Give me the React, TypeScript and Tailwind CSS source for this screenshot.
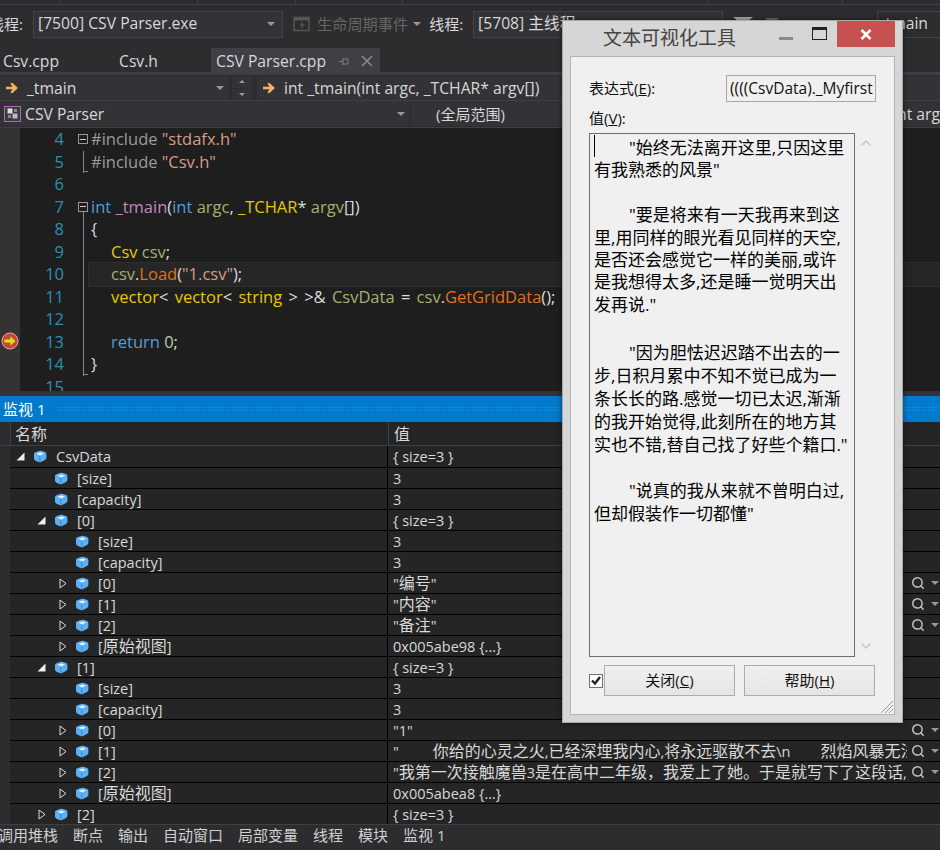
import React from "react";
import { Search, ChevronUp, ChevronDown } from "lucide-react";

const FONT = { fontFamily: '"Open Sans","Noto Sans CJK SC",sans-serif' };

function Caret({ className = "" }: { className?: string }) {
  return <span className={"inline-block w-0 h-0 border-x-[4px] border-x-transparent border-t-[4px] border-t-[#999] " + className} />;
}

function Cube() {
  return (
    <svg width="14" height="13" viewBox="0 0 14 13" className="shrink-0 block">
      <path d="M1 4 Q1 2.5 3 2 L7 0.8 Q8 0.6 9 1 L12 2 Q13.4 2.6 13.4 4 L13.4 8 Q13.4 9.2 12 10 L8 12 Q7 12.5 6 12.2 L2.5 10.8 Q1 10 1 8.5 Z" fill="#5cb0f5" />
      <path d="M3.4 3.8 L7.4 2.5 L11 3.6 L7.4 5.4 Z" fill="#e4f3ff" />
      <path d="M6.8 6 L6.8 11.5" stroke="#3a80bd" strokeWidth="0.9" />
    </svg>
  );
}

function OpenTri() {
  return (
    <svg width="9" height="9" viewBox="0 0 9 9" className="shrink-0 -translate-x-px">
      <path d="M8.5 0.5 L8.5 8.5 L0.5 8.5 Z" fill="#eee" />
    </svg>
  );
}
function ClosedTri() {
  return (
    <svg width="8" height="11" viewBox="0 0 8 11" className="shrink-0">
      <path d="M1 1 L7 5.5 L1 10 Z" fill="none" stroke="#ddd" strokeWidth="1" />
    </svg>
  );
}

function Arrow() {
  return (
    <svg width="14" height="12" viewBox="0 0 14 12" className="shrink-0">
      <path d="M1 4.8 H7.4 L5.4 1.6 L7.2 0.8 L13 6 L7.2 11.2 L5.4 10.4 L7.4 7.2 H1 Z" fill="#f2b263" />
    </svg>
  );
}

function T({ s }: { s: string }) {
  const parts = s.split(/([\u4e00-\u9fff，。]+)/);
  return (
    <>
      {parts.map((p, i) =>
        i % 2 === 1 ? (
          <span key={i} className="text-[16px]">{p}</span>
        ) : (
          <span key={i}>{p}</span>
        )
      )}
    </>
  );
}

type Row = { d: number; t?: "o" | "c"; n: string; v: string; mag?: boolean };
const rows: Row[] = [
  { d: 0, t: "o", n: "CsvData", v: "{ size=3 }" },
  { d: 1, n: "[size]", v: "3" },
  { d: 1, n: "[capacity]", v: "3" },
  { d: 1, t: "o", n: "[0]", v: "{ size=3 }" },
  { d: 2, n: "[size]", v: "3" },
  { d: 2, n: "[capacity]", v: "3" },
  { d: 2, t: "c", n: "[0]", v: '"编号"', mag: true },
  { d: 2, t: "c", n: "[1]", v: '"内容"', mag: true },
  { d: 2, t: "c", n: "[2]", v: '"备注"', mag: true },
  { d: 2, t: "c", n: "[原始视图]", v: "0x005abe98 {...}" },
  { d: 1, t: "o", n: "[1]", v: "{ size=3 }" },
  { d: 2, n: "[size]", v: "3" },
  { d: 2, n: "[capacity]", v: "3" },
  { d: 2, t: "c", n: "[0]", v: '"1"', mag: true },
  { d: 2, t: "c", n: "[1]", v: '"\u00a0\u00a0\u00a0\u00a0\u00a0\u00a0\u00a0\u00a0\u00a0你给的心灵之火,已经深埋我内心,将永远驱散不去\\n\u00a0\u00a0\u00a0\u00a0\u00a0\u00a0\u00a0\u00a0烈焰风暴无法', mag: true },
  { d: 2, t: "c", n: "[2]", v: '"我第一次接触魔兽3是在高中二年级，我爱上了她。于是就写下了这段话,那', mag: true },
  { d: 2, t: "c", n: "[原始视图]", v: "0x005abea8 {...}" },
  { d: 1, t: "c", n: "[2]", v: "{ size=3 }" },
];

const C = {
  kw: "text-[#569cd6]",
  ty: "text-[#e8c800]",
  fn: "text-[#e0701e]",
  va: "text-[#a8b070]",
  st: "text-[#d69d85]",
  pp: "text-[#9b9b9b]",
  pu: "text-[#dcdcdc]",
  mg: "text-[#c586c0]",
};

const code: React.ReactNode[] = [
  <><span className={C.pp}>#include </span><span className={C.st}>"stdafx.h"</span></>,
  <><span className={C.pp}>#include </span><span className={C.st}>"Csv.h"</span></>,
  <></>,
  <><span className={C.kw}>int </span><span className={C.mg}>_tmain</span><span className={C.pu}>(</span><span className={C.kw}>int </span><span className={C.va}>argc</span><span className={C.pu}>, </span><span className={C.ty}>_TCHAR</span><span className={C.pu}>* </span><span className={C.va}>argv</span><span className={C.pu}>[])</span></>,
  <span className={C.pu}>{"{"}</span>,
  <span className="pl-5"><span className={C.ty}>Csv </span><span className={C.va}>csv</span><span className={C.pu}>;</span></span>,
  <span className="pl-5"><span className={C.va}>csv</span><span className={C.pu}>.</span><span className={C.fn}>Load</span><span className={C.pu}>(</span><span className={C.st}>"1.csv"</span><span className={C.pu}>);</span></span>,
  <span className="pl-5 [word-spacing:2px]"><span className={C.ty}>vector</span><span className={C.pu}>{"< "}</span><span className={C.ty}>vector</span><span className={C.pu}>{"< "}</span><span className={C.ty}>string</span><span className={C.pu}>{" > >& "}</span><span className={C.va}>CsvData </span><span className={C.pu}>= </span><span className={C.va}>csv</span><span className={C.pu}>.</span><span className={C.fn}>GetGridData</span><span className={C.pu}>();</span></span>,
  <></>,
  <span className="pl-5"><span className={C.kw}>return </span><span className="text-[#b5cea8]">0</span><span className={C.pu}>;</span></span>,
  <span className={C.pu}>{"}"}</span>,
  <></>,
];

export default function App() {
  return (
    <div style={FONT} className="relative w-[940px] h-[850px] overflow-hidden bg-[#2d2d30] text-[#d8d8d8] text-[15.7px] flex flex-col">
      {/* top strip */}
      <div className="h-[5px] flex border-b border-[#3f3f46] shrink-0">
        <div className="w-[60px] border-r border-[#3f3f46]" />
        <div className="w-[138px] border-r border-[#3f3f46]" />
        <div className="w-[98px] border-r border-[#3f3f46]" />
        <div className="w-[107px] border-r border-[#3f3f46]" />
        <div className="w-[304px]" />
        <div className="w-[136px] border-x border-[#3f3f46]" />
      </div>
      {/* debug toolbar */}
      <div className="h-[43px] flex items-center shrink-0 pb-[5px]">
        <div className="w-[33px] shrink-0 flex justify-end overflow-hidden pr-[10px] whitespace-nowrap"><span className="shrink-0 text-[15px]">线程:</span></div>
        <div className="w-[250px] shrink-0 h-[27px] border border-[#434346] bg-[#333337] flex items-center justify-between pl-[4px] pr-[7px]">
          <span>[7500] CSV Parser.exe</span>
          <Caret />
        </div>
        <svg width="18" height="16" viewBox="0 0 18 16" className="ml-[10px] shrink-0"><rect x="1" y="1.5" width="15" height="13" fill="none" stroke="#555" strokeWidth="1.5" /><rect x="1" y="1.5" width="15" height="3" fill="#555" /><path d="M9.5 5.5 L6.5 9.5 H9 L8 13 L12 8.5 H9.5 Z" fill="#555" /></svg>
        <span className="ml-[6px] text-[#656565] text-[15.2px] whitespace-nowrap">生命周期事件</span>
        <Caret className="ml-[5px]" />
        <span className="ml-[8px] text-[15px] whitespace-nowrap">线程:</span>
        <div className="ml-[10px] w-[250px] shrink-0 h-[27px] border border-[#434346] bg-[#333337] flex items-center pl-[4px] whitespace-nowrap overflow-hidden">
          [5708] 主线程
        </div>
        <span className="ml-[10px] w-0 h-0 border-x-[10px] border-x-transparent border-t-[8px] border-t-[#aaa] -translate-y-[3px]" />
        <span className="ml-[12px] w-0 h-0 border-x-[7px] border-x-transparent border-t-[6px] border-t-[#666] -translate-y-[3px]" />
        <span className="ml-auto w-[63px] shrink-0 h-[27px] border border-[#434346] border-r-0 bg-[#2d2d30] flex items-center justify-end pr-[12px]">_tmain</span>
      </div>
      {/* tabs */}
      <div className="h-[24px] flex items-center shrink-0">
        <span className="w-[119px] pl-[3px] pt-[3px]">Csv.cpp</span>
        <span className="w-[92px] pt-[3px]">Csv.h</span>
        <div className="h-full w-[169px] bg-[#3f3f46] flex items-center pl-[5px]">
          <span className="pt-[3px]">CSV Parser.cpp</span>
          <svg width="11" height="9" viewBox="0 0 11 9" className="ml-[13px] mt-[2px]"><path d="M0 4.5 H4 M4 1 V8 M4 2 H9 V7 H4 M9 4.5" fill="none" stroke="#808088" strokeWidth="1" /></svg>
          <svg width="12" height="12" viewBox="0 0 12 12" className="ml-[11px] mt-[2px]"><path d="M1 1 L11 11 M11 1 L1 11" stroke="#8a8a90" strokeWidth="1.6" /></svg>
        </div>
      </div>
      <div className="h-[3px] bg-[#3f3f46] shrink-0" />
      {/* nav 1 */}
      <div className="h-[26px] flex shrink-0 pt-[1px] border-b border-[#3f3f46]">
        <div className="w-[229px] shrink-0 bg-[#333337] flex items-center pl-[5px] justify-between pr-[5px]">
          <div className="flex items-center gap-[8px]"><Arrow /><span className="pt-[1px]">_tmain</span></div>
          <Caret />
        </div>
        <div className="w-[20px] ml-[3px] shrink-0 flex flex-col gap-[1px]">
          <span className="flex-1 bg-[#333337] flex items-center justify-center"><span className="w-0 h-0 border-x-[3px] border-x-transparent border-b-[3px] border-b-[#999]" /></span>
          <span className="flex-1 bg-[#333337] flex items-center justify-center"><span className="w-0 h-0 border-x-[3px] border-x-transparent border-t-[3px] border-t-[#999]" /></span>
        </div>
        <div className="flex-1 ml-[5px] bg-[#333337] flex items-center pl-[5px] gap-[8px]">
          <Arrow /><span className="pt-[1px]">int _tmain(int argc, _TCHAR* argv[])</span>
        </div>
      </div>
      {/* nav 2 */}
      <div className="h-[27px] flex shrink-0 pb-[1px] border-b border-[#3f3f46]">
        <div className="w-[409px] shrink-0 bg-[#333337] flex items-center justify-between pl-[4px] pr-[4px]">
          <div className="flex items-center gap-[3px]">
            <svg width="18" height="16" viewBox="0 0 18 16"><rect x="0.5" y="0.5" width="16" height="15" fill="#3a3a40" stroke="#a86cb0" /><rect x="3.5" y="2.5" width="5" height="5" fill="#ddd" /><rect x="8.5" y="7.5" width="5" height="5" fill="#bbb" /><rect x="10" y="3" width="3" height="3" fill="#888" /><rect x="4" y="9" width="3" height="3" fill="#888" /></svg>
            <span className="pt-[3px]">CSV Parser</span>
          </div>
          <Caret />
        </div>
        <div className="flex-1 min-w-0 ml-[2px] bg-[#333337] flex items-center justify-between pl-[25px] overflow-hidden whitespace-nowrap">
          <span className="text-[15px] pt-[2px]">(全局范围)</span>
          <span className="pt-[3px]">nt arg</span>
        </div>
      </div>
      {/* editor */}
      <div className="h-[263px] flex shrink-0 overflow-hidden relative bg-[#1e1e1e] text-[16.5px]">
        <div className="w-[20px] bg-[#333333] shrink-0 relative">
          <svg width="18" height="18" viewBox="0 0 18 18" className="absolute left-[1px] top-[204px]">
            <circle cx="9" cy="9" r="8" fill="#d04040" stroke="#f0a0a0" />
            <path d="M3 7 H9 V3.5 L15 9 L9 14.5 V11 H3 Z" fill="#f0d020" stroke="#7a6000" strokeWidth="0.7" />
          </svg>
        </div>
        <div className="flex-1 flex flex-col">
          {code.map((c, i) => (
            <div key={i} className="h-[22.5px] shrink-0 leading-[22.5px] flex whitespace-pre">
              <span className="w-[44px] text-right text-[#2b91af] shrink-0">{i + 4}</span>
              <span className="w-[11px] shrink-0 relative ml-[14px]">
                {i === 0 || i === 3 ? (
                  <span className="absolute left-0 top-[6px] w-[10px] h-[10px] border border-[#999] flex items-center justify-center"><span className="w-[6px] h-px bg-[#ccc]" /></span>
                ) : null}
                {(i === 1 || (i >= 4 && i <= 10)) ? <span className="absolute left-[5px] top-0 bottom-0 w-px bg-[#858585]" /> : null}
                {i === 1 || i === 10 ? <span className="absolute left-[5px] bottom-[1px] w-[5px] h-px bg-[#858585]" /> : null}
                {i === 3 ? <span className="absolute left-[5px] top-[16px] bottom-0 w-px bg-[#858585]" /> : null}
              </span>
              <span className={"flex-1 pl-[2px] " + (i === 6 ? "bg-[#262626] outline outline-[#2e2e2e]" : "")}>{c}</span>
            </div>
          ))}
        </div>
      </div>
      {/* watch title */}
      <div className="h-[5px] bg-[#333337] shrink-0" />
      <div className="h-[26px] bg-[#007acc] shrink-0 flex items-center pl-[3px] text-white gap-[12px]">
        <span className="text-[15px]">监视 1</span>
        <span className="flex-1 h-[6px] opacity-40 bg-[radial-gradient(#8cc8ee_1px,transparent_1px)] bg-[length:3px_3px]" />
      </div>
      {/* watch header */}
      <div className="h-[24px] shrink-0 flex bg-[#252526] border-b border-[#3f3f46] text-[16px]">
        <div className="w-[10px] bg-[#2d2d30]" />
        <div className="w-[378px] pl-[4px] flex items-center border-l border-[#3f3f46]">名称</div>
        <div className="flex-1 pl-[5px] flex items-center border-l border-[#3f3f46]">值</div>
      </div>
      {/* rows */}
      <div className="flex-1 flex flex-col overflow-hidden">
        {rows.map((r, i) => (
          <div key={i} className={(i === 0 ? "h-[22px] " : "h-[21px] ") + "shrink-0 flex ml-[10px] bg-[#252526] border-b border-black items-center text-[14.5px] leading-[20px]"}>
            <div className="w-[378px] h-full flex items-center shrink-0 border-r border-black">
              <span className="w-[10px] flex justify-center shrink-0" style={{ marginLeft: 6 + r.d * 21 }}>
                {r.t === "o" ? <OpenTri /> : r.t === "c" ? <ClosedTri /> : null}
              </span>
              <span className="ml-[7px]"><Cube /></span>
              <span className="ml-[9px] pt-px whitespace-nowrap"><T s={r.n} /></span>
            </div>
            <div className="flex-1 min-w-0 h-full flex items-center">
              <span className="w-[519px] pl-[5px] pt-px whitespace-pre overflow-hidden shrink-0"><T s={r.v} /></span>
              {r.mag ? (
                <span className="flex items-center gap-[6px] ml-[4px] shrink-0">
                  <Search size={14} strokeWidth={2.5} className="text-[#c4c4c4]" />
                  <Caret />
                </span>
              ) : null}
            </div>
          </div>
        ))}
      </div>
      {/* bottom tabs */}
      <div className="absolute left-0 right-0 bottom-0 h-[26px] bg-[#2d2d30] flex items-center text-[15px] text-[#d0d0d0] whitespace-nowrap border-t border-[#3f3f46] pb-[4px]">
        <div className="flex gap-[15px] -ml-[2px]">
          <span>调用堆栈</span><span>断点</span><span>输出</span><span>自动窗口</span><span>局部变量</span><span>线程</span><span>模块</span><span>监视 1</span>
        </div>
      </div>

      {/* dialog */}
      <div className="absolute left-[562px] top-[20px] w-[341px] h-[703px] bg-[#d6d6d6] border border-[#a8a8a8] text-[#111] flex flex-col shadow-[0_0_6px_rgba(0,0,0,0.5)]">
        <div className="h-[35px] shrink-0 flex relative">
          <span className="absolute left-[40px] top-[3px] text-[19px] text-[#444]">文本可视化工具</span>
          <div className="ml-auto flex items-start mr-[7px]">
            <span className="mt-[16px] mr-[19px] w-[14px] h-[3px] bg-[#8a8a8a]" />
            <span className="mt-[6px] mr-[10px] w-[15px] h-[13px] border border-[#222] border-t-[3px]" />
            <span className="w-[58px] h-[26px] bg-[#c75050] flex items-center justify-center">
              <svg width="12" height="11" viewBox="0 0 12 11"><path d="M1.5 1 L10.5 10 M10.5 1 L1.5 10" stroke="#fff" strokeWidth="2.6" /></svg>
            </span>
          </div>
        </div>
        <div className="mx-[7px] flex-1 mb-[7px] bg-[#f0f0f0] border border-[#b4b4b4] flex flex-col pl-[18px] pr-[18px] text-[15px] relative">
          <div className="flex items-center justify-between mt-[18px] h-[27px] shrink-0">
            <span>表达式(<span className="underline">E</span>):</span>
            <div className="w-[150px] h-[27px] border border-[#a8a8a8] bg-[#f0f0f0] flex items-center pl-[3px] overflow-hidden whitespace-nowrap text-[15.5px]">((((CsvData)._Myfirst</div>
          </div>
          <div className="mt-[6px] h-[20px] leading-[20px] shrink-0">值(<span className="underline">V</span>):</div>
          <div className="mt-[5px] h-[524px] w-[266px] shrink-0 border border-[#6e6e6e] bg-[#f0f0f0] text-[17px] text-black pl-[4px] pr-[6px] pt-[3px] relative">
            <span className="absolute left-[4px] top-[1px] w-px h-[22px] bg-black" />
            <p className="indent-[35px] leading-[22.4px]">"始终无法离开这里,只因这里有我熟悉的风景"</p>
            <p className="indent-[35px] leading-[22.4px] mt-[22.4px]">"要是将来有一天我再来到这里,用同样的眼光看见同样的天空,是否还会感觉它一样的美丽,或许是我想得太多,还是睡一觉明天出发再说."</p>
            <p className="indent-[35px] leading-[23px] mt-[25px]">"因为胆怯迟迟踏不出去的一步,日积月累中不知不觉已成为一条长长的路.感觉一切已太迟,渐渐的我开始觉得,此刻所在的地方其实也不错,替自己找了好些个籍口."</p>
            <p className="indent-[35px] leading-[23px] mt-[23px]">"说真的我从来就不曾明白过,但却假装作一切都懂"</p>
          </div>
          <ChevronUp size={16} className="absolute left-[287px] top-[78px] text-[#c4c4c4]" />
          <ChevronDown size={16} className="absolute left-[287px] top-[581px] text-[#c4c4c4]" />
          <div className="flex items-center mt-[8px] h-[31px] shrink-0">
            <span className="w-[14px] h-[14px] border border-[#707070] bg-white flex items-center justify-center shrink-0">
              <svg width="10" height="9" viewBox="0 0 10 9"><path d="M1 4.5 L4 7.5 L9 1" fill="none" stroke="#222" strokeWidth="2.4" /></svg>
            </span>
            <button className="ml-px w-[131px] h-[31px] border border-[#acacac] bg-gradient-to-b from-[#f0f0f0] to-[#e5e5e5]">关闭(<span className="underline">C</span>)</button>
            <button className="ml-[9px] w-[131px] h-[31px] border border-[#acacac] bg-gradient-to-b from-[#f0f0f0] to-[#e5e5e5]">帮助(<span className="underline">H</span>)</button>
          </div>
          <svg width="14" height="14" viewBox="0 0 14 14" className="absolute right-0 bottom-0">
            <path d="M13 1 L1 13 M13 5 L5 13 M13 9 L9 13" stroke="#999" strokeWidth="1" />
          </svg>
        </div>
      </div>
    </div>
  );
}
